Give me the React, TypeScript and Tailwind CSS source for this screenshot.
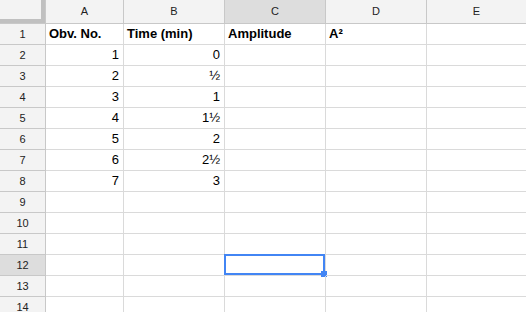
import React from "react";

const cols = ["A", "B", "C", "D", "E"];
const data: string[][] = [
  ["Obv. No.", "Time (min)", "Amplitude", "A²", ""],
  ["1", "0", "", "", ""],
  ["2", "½", "", "", ""],
  ["3", "1", "", "", ""],
  ["4", "1½", "", "", ""],
  ["5", "2", "", "", ""],
  ["6", "2½", "", "", ""],
  ["7", "3", "", "", ""],
];

export default function App() {
  const rows = Array.from({ length: 14 }, (_, i) => i + 1);
  return (
    <div
      className="w-[526px] h-[312px] overflow-hidden bg-white"
      style={{ fontFamily: '"Liberation Sans", Arial, sans-serif' }}
    >
      <div className="grid grid-cols-[46px_78px_101px_101px_101px_99px] auto-rows-[21px] grid-rows-[24px]">
        {/* corner */}
        <div className="h-[24px] bg-[#f3f3f3] border-r border-b border-[#c8c8c8]">
          <div className="w-full h-full border-r-4 border-b-4 border-[#c0c0c0]" />
        </div>
        {cols.map((c) => (
          <div
            key={c}
            className={`h-[24px] flex items-center justify-center text-[11px] text-[#222] border-b border-[#c8c8c8] ${
              c === "E" ? "" : "border-r"
            } ${c === "C" ? "bg-[#dddddd]" : "bg-[#f3f3f3]"}`}
          >
            {c}
          </div>
        ))}
        {rows.map((r) => {
          const row = data[r - 1] || ["", "", "", "", ""];
          return (
            <React.Fragment key={r}>
              <div
                className={`flex items-center justify-center text-[11px] text-[#222] border-r border-b border-[#c8c8c8] ${
                  r === 12 ? "bg-[#dddddd]" : "bg-[#f3f3f3]"
                }`}
              >
                {r}
              </div>
              {row.map((v, ci) => {
                const isHeader = r === 1;
                const selected = r === 12 && ci === 2;
                return (
                  <div
                    key={ci}
                    className={`relative flex items-center text-[13px] text-black border-b border-[#dadada] ${
                      ci === 4 ? "" : "border-r"
                    } ${isHeader ? "justify-start pl-[3px] font-bold" : "justify-end pr-[4px]"}`}
                  >
                    {v}
                    {selected && (
                      <div className="absolute left-[-1px] top-[-1px] right-0 bottom-0 border-2 border-[#4285f4]">
                        <div className="absolute right-[-4px] bottom-[-4px] w-[6px] h-[6px] bg-[#4285f4]" />
                      </div>
                    )}
                  </div>
                );
              })}
            </React.Fragment>
          );
        })}
      </div>
    </div>
  );
}
